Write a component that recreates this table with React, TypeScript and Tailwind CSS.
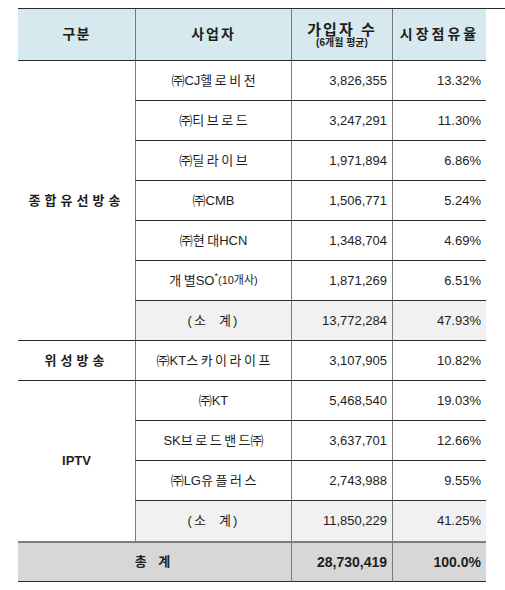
import React from 'react';

type Row = { name: React.ReactNode; subs: string; share: string; sub?: boolean };

// Hangul runs get wide letter-spacing, latin letters stay tight as in the source table
function Spaced({ text }: { text: string }) {
  const parts = text.match(/[\uAC00-\uD7A3]+|[^\uAC00-\uD7A3]+/g) || [];
  return (
    <>
      {parts.map((p, i) =>
        /[\uAC00-\uD7A3]/.test(p) ? (
          <span key={i}>
            <span className="tracking-[2.5px]">{p.slice(0, -1)}</span>
            {p.slice(-1)}
          </span>
        ) : (
          <span key={i}>{p}</span>
        ),
      )}
    </>
  );
}

const cable: Row[] = [
  { name: <Spaced text="㈜CJ헬로비전" />, subs: '3,826,355', share: '13.32%' },
  { name: <Spaced text="㈜티브로드" />, subs: '3,247,291', share: '11.30%' },
  { name: <Spaced text="㈜딜라이브" />, subs: '1,971,894', share: '6.86%' },
  { name: <Spaced text="㈜CMB" />, subs: '1,506,771', share: '5.24%' },
  { name: <Spaced text="㈜현대HCN" />, subs: '1,348,704', share: '4.69%' },
  {
    name: (
      <>
        <Spaced text="개별" />SO<sup className="text-[9px] -top-[5px]">*</sup>
        <span className="text-[11px]">(10개사)</span>
      </>
    ),
    subs: '1,871,269',
    share: '6.51%',
  },
  { name: <span className="tracking-[2px] whitespace-pre">(소  계)</span>, subs: '13,772,284', share: '47.93%', sub: true },
];

const iptv: Row[] = [
  { name: <Spaced text="㈜KT" />, subs: '5,468,540', share: '19.03%' },
  { name: <Spaced text="SK브로드밴드㈜" />, subs: '3,637,701', share: '12.66%' },
  { name: <Spaced text="㈜LG유플러스" />, subs: '2,743,988', share: '9.55%' },
  { name: <span className="tracking-[2px] whitespace-pre">(소  계)</span>, subs: '11,850,229', share: '41.25%', sub: true },
];

const line = 'border-b border-b-[#2a2a2a]';
const vline = 'border-l border-l-[#7a7a7a]';

function DataRow({ row, last }: { row: Row; last?: boolean }) {
  const bg = row.sub ? 'bg-[#f1f1f1]' : 'bg-white';
  const b = last ? '' : line;
  return (
    <>
      <div className={`${bg} ${b} ${vline} flex items-center justify-center whitespace-pre`}>{row.name}</div>
      <div className={`${bg} ${b} ${vline} flex items-center justify-end pr-[5px]`}>{row.subs}</div>
      <div className={`${bg} ${b} ${vline} flex items-center justify-end pr-[5px]`}>{row.share}</div>
    </>
  );
}

export default function App() {
  return (
    <div className="w-[505px] h-[590px] bg-white pl-[18px] pt-[8px] font-['Liberation_Sans','Noto_Sans_CJK_KR',sans-serif] text-[13px] text-[#1e1e1e]">
      <div className="grid grid-cols-[117px_156px_101px_94px] grid-rows-[52px_repeat(12,40px)_41px] border-t border-t-[#2a2a2a]">
        {/* header */}
        <div className={`bg-[#d5e9ee] ${line} flex items-center justify-center font-bold text-[14px] tracking-[1px]`}>구분</div>
        <div className={`bg-[#d5e9ee] ${line} ${vline} flex items-center justify-center font-bold text-[14px] tracking-[2px]`}>사업자</div>
        <div className={`bg-[#d5e9ee] ${line} ${vline} flex flex-col items-center justify-center font-bold`}>
          <span className="text-[15px] leading-[15px] tracking-[2px]">가입자 수</span>
          <span className="text-[10px] leading-[11px]">(6개월 평균)</span>
        </div>
        <div className={`bg-[#d5e9ee] ${line} ${vline} flex items-center justify-center font-bold tracking-[3px] text-[14px]`}>시장점유율</div>

        {/* cable */}
        <div className={`row-span-7 ${line} flex items-center justify-center font-bold tracking-[4px]`}>종합유선방송</div>
        {cable.map((r, i) => (
          <DataRow key={i} row={r} />
        ))}

        {/* satellite */}
        <div className={`${line} flex items-center justify-center font-bold tracking-[4px]`}>위성방송</div>
        <DataRow row={{ name: <Spaced text="㈜KT스카이라이프" />, subs: '3,107,905', share: '10.82%' }} />

        {/* iptv */}
        <div className="row-span-4 flex items-center justify-center font-bold">IPTV</div>
        {iptv.map((r, i) => (
          <DataRow key={i} row={r} last={i === iptv.length - 1} />
        ))}

        {/* total */}
        <div className="col-span-2 bg-[#d7d7d7] border-t-2 border-t-[#7d7d7d] border-b border-b-[#2a2a2a] flex items-center justify-center font-bold tracking-[4px]">
          총 계
        </div>
        <div className={`bg-[#d7d7d7] border-t-2 border-t-[#7d7d7d] ${line} ${vline} flex items-center justify-end pr-[5px] font-bold text-[14px]`}>
          28,730,419
        </div>
        <div className={`bg-[#d7d7d7] border-t-2 border-t-[#7d7d7d] ${line} ${vline} flex items-center justify-end pr-[5px] font-bold text-[14px]`}>
          100.0%
        </div>
      </div>
    </div>
  );
}
